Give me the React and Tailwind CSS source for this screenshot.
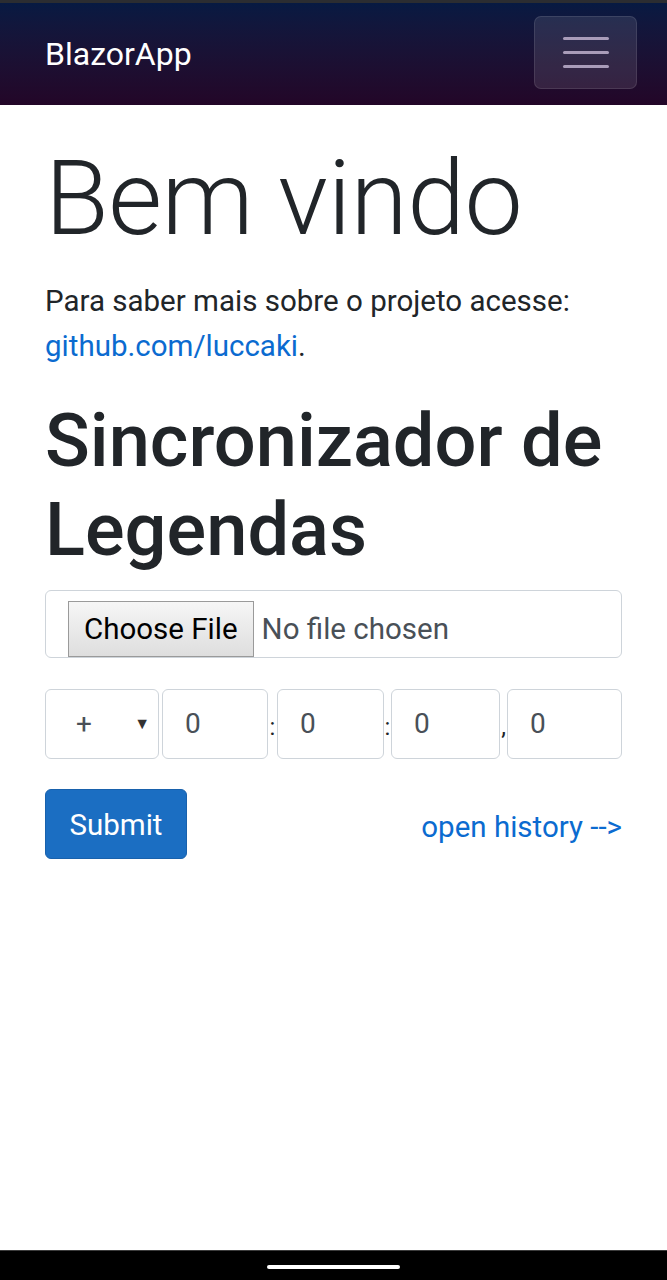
// App.jsx — BlazorApp sync page (mobile)
const Navbar = () => {
  return (
    <div className="flex flex-col">
      <div className="h-[3px] bg-[#2b2d31]" />
      <div className="h-[102px] bg-linear-to-b from-[#071a42] to-[#230628] flex items-center justify-between pl-[45px] pr-[30px]">
        <span className="text-white text-[32px] leading-none">BlazorApp</span>
        <button className="w-[103px] h-[73px] mb-[3px] rounded-[7px] bg-white/10 border border-white/10 flex flex-col items-center justify-center gap-[11px]">
          <span className="block w-[46px] h-[3px] rounded-full bg-[#a99cb9]" />
          <span className="block w-[46px] h-[3px] rounded-full bg-[#a99cb9]" />
          <span className="block w-[46px] h-[3px] rounded-full bg-[#a99cb9]" />
        </button>
      </div>
    </div>
  );
};

const TimeInput = ({ value, className }) => (
  <div className={`${className} h-[70px] border border-[#ced4da] rounded-[6px] flex items-center pl-[22px] text-[28px] text-[#495057]`}>
    {value}
  </div>
);

const Sep = ({ ch, className }) => (
  <span className={`${className} text-center text-[24px] text-[#212529] leading-none pt-[6px]`}>{ch}</span>
);

export default function App() {
  return (
    <div className="min-h-[1280px] flex flex-col bg-white text-[#212529]" style={{ fontFamily: "Roboto, 'Noto Sans', sans-serif" }}>
      <Navbar />

      <main className="flex-1 px-[45px] pt-[34px]">
        <h1 className="text-[104px] font-light leading-[120px] tracking-[-0.5px]">Bem vindo</h1>

        <p className="mt-[20px] text-[29.5px] leading-[45px]">
          Para saber mais sobre o projeto acesse:{" "}
          <a href="#" className="text-[#0b6bd0]">github.com/luccaki</a>.
        </p>

        <h2 className="mt-[27px] text-[74px] font-medium leading-[89px]">Sincronizador de Legendas</h2>

        {/* File picker */}
        <div className="mt-[16px] h-[68px] border border-[#ced4da] rounded-[6px] flex items-start pl-[22px] pt-[10px]">
          <div className="h-[56px] px-[15px] flex items-center border border-[#9a9a9a] bg-linear-to-b from-[#f6f6f6] to-[#dedede] text-[29.5px] text-black">
            Choose File
          </div>
          <span className="ml-[8px] h-[56px] flex items-center text-[29.5px] text-[#495057]">No file chosen</span>
        </div>

        {/* Time offset */}
        <div className="mt-[31px] flex items-center">
          <div className="w-[114px] h-[70px] border border-[#ced4da] rounded-[6px] flex items-center justify-between pl-[30px] pr-[8px] text-[28px] text-[#495057]">
            <span>+</span>
            <span className="text-[16px] text-[#333]">▼</span>
          </div>
          <div className="w-[3px]" />
          <TimeInput value="0" className="w-[106px]" />
          <Sep ch=":" className="w-[9px]" />
          <TimeInput value="0" className="w-[107px]" />
          <Sep ch=":" className="w-[7px]" />
          <TimeInput value="0" className="w-[109px]" />
          <Sep ch="," className="w-[7px]" />
          <TimeInput value="0" className="flex-1" />
        </div>

        <div className="mt-[30px] flex items-center justify-between">
          <button className="w-[142px] h-[70px] rounded-[6px] bg-[#1b6ec2] border border-[#1861ac] text-white text-[29.5px] pt-[2px]">
            Submit
          </button>
          <a href="#" className="pt-[6px] text-[29.5px] text-[#0b6bd0]">open history --&gt;</a>
        </div>
      </main>

      {/* phone nav bar */}
      <div className="h-[30px] bg-black border-t border-[#3c3c3c] flex justify-center pt-[14px]">
        <div className="w-[133px] h-[4px] rounded-full bg-white" />
      </div>
    </div>
  );
}
